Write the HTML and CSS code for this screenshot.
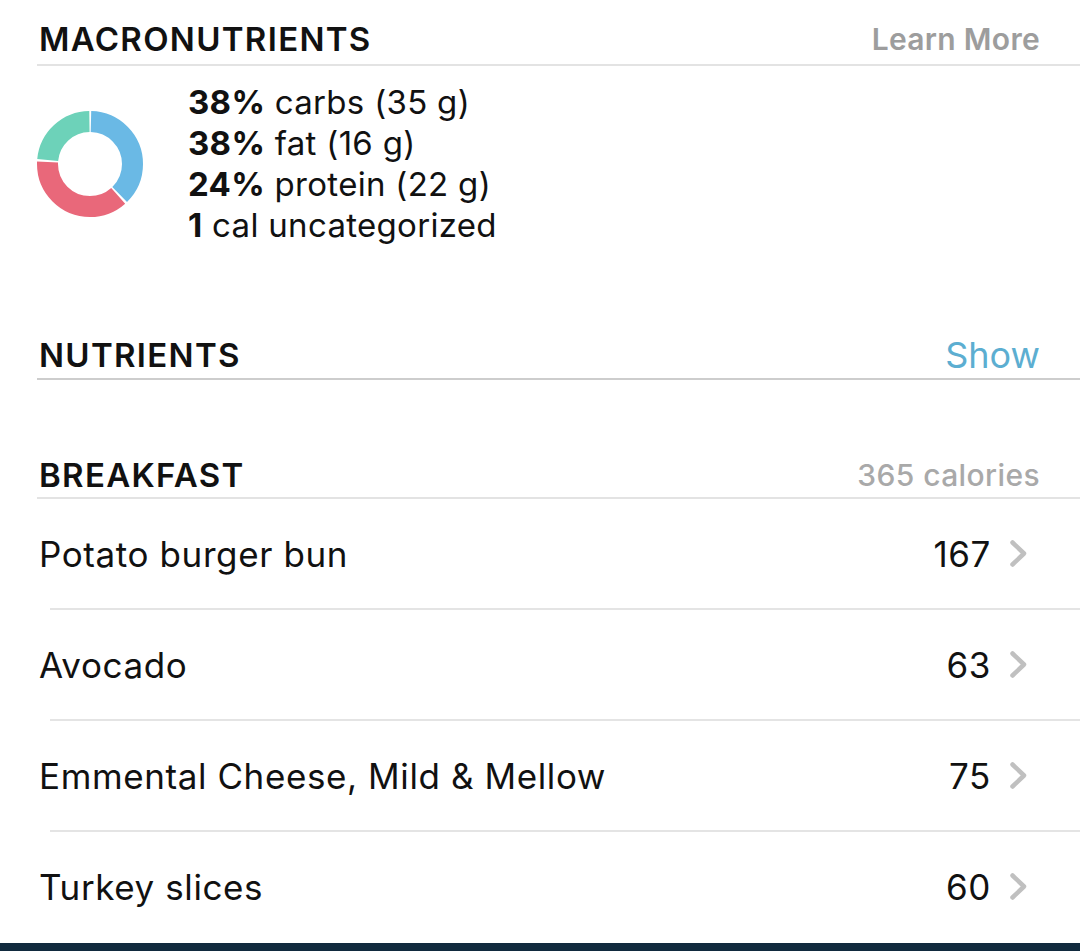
FILE: index.html
```html
<!DOCTYPE html>
<html lang="en">
<head>
<meta charset="utf-8">
<title>Diary</title>
<link rel="stylesheet" href="styles.css">
</head>
<body>
<div class="page">
  <section class="section">
    <div class="head head-first">
      <h2 class="title">MACRONUTRIENTS</h2>
      <span class="link link-gray">Learn More</span>
    </div>
    <div class="macro">
      <svg class="donut" width="106" height="106" viewBox="0 0 106 106">
        <g transform="rotate(-90 53 53)">
          <circle cx="53" cy="53" r="42.5" fill="none" stroke="#6ab9e5" stroke-width="21" stroke-dasharray="99.5 300" stroke-dashoffset="-1"/>
          <circle cx="53" cy="53" r="42.5" fill="none" stroke="#e9687a" stroke-width="21" stroke-dasharray="99.5 300" stroke-dashoffset="-102.5"/>
          <circle cx="53" cy="53" r="42.5" fill="none" stroke="#6dd2b9" stroke-width="21" stroke-dasharray="62 300" stroke-dashoffset="-204"/>
        </g>
      </svg>
      <ul class="macro-list">
        <li><b>38%</b> carbs (35 g)</li>
        <li><b>38%</b> fat (16 g)</li>
        <li><b>24%</b> protein (22 g)</li>
        <li><b>1</b> cal uncategorized</li>
      </ul>
    </div>
    <div class="head head-nutrients">
      <h2 class="title">NUTRIENTS</h2>
      <span class="link link-blue">Show</span>
    </div>
    <div class="head head-meal">
      <h2 class="title">BREAKFAST</h2>
      <span class="link link-cal">365 calories</span>
    </div>
    <div class="rows">
      <div class="row"><span class="name">Potato burger bun</span><span class="num">167</span><svg class="chev" width="17" height="27" viewBox="0 0 17 27"><path d="M2.5 2.5 L14 13.5 L2.5 24.5" fill="none" stroke="#c0c0c0" stroke-width="4.5" stroke-linecap="round" stroke-linejoin="round"/></svg></div>
      <div class="sep"></div>
      <div class="row"><span class="name">Avocado</span><span class="num">63</span><svg class="chev" width="17" height="27" viewBox="0 0 17 27"><path d="M2.5 2.5 L14 13.5 L2.5 24.5" fill="none" stroke="#c0c0c0" stroke-width="4.5" stroke-linecap="round" stroke-linejoin="round"/></svg></div>
      <div class="sep"></div>
      <div class="row"><span class="name">Emmental Cheese, Mild &amp; Mellow</span><span class="num">75</span><svg class="chev" width="17" height="27" viewBox="0 0 17 27"><path d="M2.5 2.5 L14 13.5 L2.5 24.5" fill="none" stroke="#c0c0c0" stroke-width="4.5" stroke-linecap="round" stroke-linejoin="round"/></svg></div>
      <div class="sep"></div>
      <div class="row"><span class="name">Turkey slices</span><span class="num">60</span><svg class="chev" width="17" height="27" viewBox="0 0 17 27"><path d="M2.5 2.5 L14 13.5 L2.5 24.5" fill="none" stroke="#c0c0c0" stroke-width="4.5" stroke-linecap="round" stroke-linejoin="round"/></svg></div>
    </div>
  </section>
  <div class="bottom-bar"></div>
</div>
</body>
</html>
```

FILE: styles.css
```css
* { box-sizing: border-box; }
html, body { margin: 0; padding: 0; background: #ffffff; }
body {
  font-family: Inter, "Noto Sans", "Liberation Sans", sans-serif;
  color: #111111;
  height: 951px;
  overflow: hidden;
}
.page { display: flex; flex-direction: column; height: 951px; }
.section { margin-left: 37px; flex: 1; }

.head {
  display: flex;
  align-items: center;
  justify-content: space-between;
  padding: 0 40px 3px 2px;
  line-height: 40px;
  border-bottom: 2px solid #e3e3e3;
}
.head-first { padding-top: 19px; padding-bottom: 5px; }
.head-nutrients { margin-top: 89px; border-bottom-color: #cdcdcd; }
.head-meal { margin-top: 75px; padding-bottom: 2px; }

.title {
  margin: 0;
  font-size: 33px;
  font-weight: 600;
  letter-spacing: 1.3px;
  color: #111;
}
.link { font-size: 30px; }
.link-gray { color: #9d9d9d; font-weight: 600; letter-spacing: 0.3px; }
.link-blue { color: #5caed1; font-size: 36px; font-weight: 400; }
.link-cal { color: #a9a9a9; font-weight: 500; letter-spacing: 0.4px; }

.macro {
  display: flex;
  align-items: center;
  padding-top: 16px;
}
.donut { flex: none; }
.macro-list {
  list-style: none;
  margin: 0 0 0 45px;
  padding: 0;
  font-size: 33px;
  line-height: 41px;
  letter-spacing: 0.3px;
}
.macro-list b { font-weight: 700; }

.rows { display: flex; flex-direction: column; }
.row {
  display: flex;
  align-items: center;
  height: 109px;
  padding: 0 53px 0 2px;
  font-size: 35px;
  letter-spacing: 0.6px;
}
.name { flex: 1; }
.chev { margin-left: 19px; flex: none; }
.sep { height: 2px; background: #e4e4e4; margin-left: 13px; }

.bottom-bar { height: 8px; background: #112a3e; }
```
